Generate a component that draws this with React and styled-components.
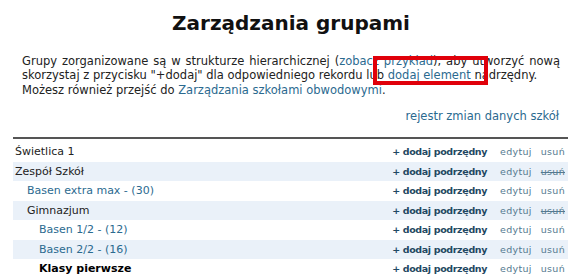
import React from "react";
import styled, { createGlobalStyle } from "styled-components";

const GlobalStyle = createGlobalStyle`
  body {
    margin: 0;
    background: #fff;
    font-family: "DejaVu Sans", Verdana, sans-serif;
    color: #222;
  }
`;

const Page = styled.div`
  width: 582px;
  height: 276px;
  overflow: hidden;
`;

const Title = styled.h1`
  margin: 11px 0 0;
  text-align: center;
  font-size: 20px;
  line-height: 24px;
  font-weight: bold;
  color: #111;
`;

const Intro = styled.p`
  position: relative;
  width: 538px;
  margin: 19px 0 0;
  padding-left: 22px;
  font-size: 11.5px;
  line-height: 14.3px;
  text-align: justify;
`;

const Link = styled.a`
  color: #2b6a8f;
  text-decoration: none;
`;

const Highlight = styled.div`
  position: absolute;
  left: 373px;
  top: 2px;
  width: 115px;
  height: 29px;
  box-sizing: border-box;
  border: 4px solid #e0000a;
`;

const Register = styled.div`
  margin-top: 12px;
  padding-right: 23px;
  text-align: right;
  font-size: 11.5px;
  line-height: 14.3px;
`;

const Tree = styled.div`
  margin: 14px 14px 0 13px;
  border-top: 2px solid #555;
  padding-top: 3px;
`;

const Row = styled.div`
  display: flex;
  align-items: center;
  justify-content: space-between;
  height: 19.5px;
  padding-left: ${(p) => 2 + p.$level * 12}px;
  padding-right: 3px;
  background: ${(p) => (p.$shaded ? "#eaf1f9" : "transparent")};
  font-size: 11px;
`;

const Name = styled.span`
  color: ${(p) => (p.$link ? "#2b6a8f" : p.$bold ? "#000" : "#222")};
  font-weight: ${(p) => (p.$bold ? "bold" : "normal")};
`;

const Actions = styled.div`
  display: flex;
  align-items: center;
  font-size: 9.5px;
`;

const Add = styled.a`
  color: #1f4862;
  font-weight: bold;
  letter-spacing: -0.35px;
  margin-right: 13px;
`;

const Action = styled.a`
  color: #557a90;
  letter-spacing: 0.3px;
  text-decoration: ${(p) => (p.$disabled ? "line-through" : "none")};
  & + & {
    margin-left: 9px;
  }
`;

const rows = [
  { name: "Świetlica 1", level: 0 },
  { name: "Zespół Szkół", level: 0, shaded: true, locked: true },
  { name: "Basen extra max - (30)", level: 1, link: true },
  { name: "Gimnazjum", level: 1, shaded: true, locked: true },
  { name: "Basen 1/2 - (12)", level: 2, link: true },
  { name: "Basen 2/2 - (16)", level: 2, link: true, shaded: true },
  { name: "Klasy pierwsze", level: 2, bold: true },
];

export default function App() {
  return (
    <Page>
      <GlobalStyle />
      <Title>Zarządzania grupami</Title>
      <Intro>
        Grupy zorganizowane są w strukturze hierarchicznej (
        <Link>zobacz przykład</Link>), aby utworzyć nową skorzystaj z przycisku
        "+dodaj" dla odpowiedniego rekordu lub <Link>dodaj element</Link>{" "}
        nadrzędny.
        <br />
        Możesz również przejść do <Link>Zarządzania szkołami obwodowymi</Link>.
        <Highlight />
      </Intro>
      <Register>
        <Link>rejestr zmian danych szkół</Link>
      </Register>
      <Tree>
        {rows.map((r) => (
          <Row key={r.name} $level={r.level} $shaded={r.shaded}>
            <Name $link={r.link} $bold={r.bold}>
              {r.name}
            </Name>
            <Actions>
              <Add>+ dodaj podrzędny</Add>
              <Action>edytuj</Action>
              <Action $disabled={r.locked}>usuń</Action>
            </Actions>
          </Row>
        ))}
      </Tree>
    </Page>
  );
}
